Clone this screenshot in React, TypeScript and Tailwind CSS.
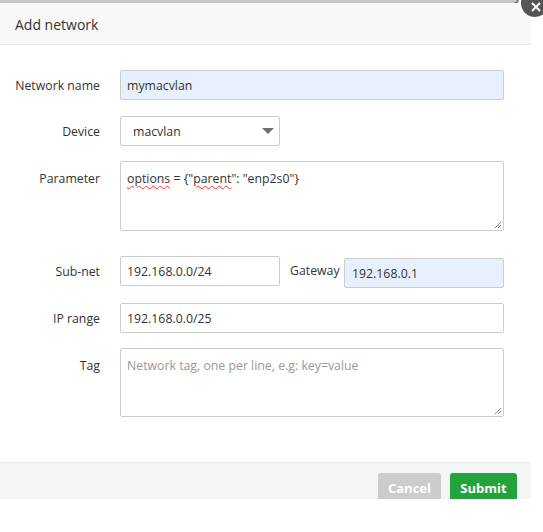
import React from 'react';

const font = { fontFamily: '"Open Sans", "Noto Sans", sans-serif' };

function ResizeGrip() {
  return (
    <svg className="absolute right-[1px] bottom-[1px]" width="9" height="9" viewBox="0 0 9 9">
      <path d="M8 2 L2 8 M8 5 L5 8" stroke="#888" strokeWidth="1" fill="none" />
    </svg>
  );
}

function Row({ label, top = false, children, className = '' }: { label: string; top?: boolean; children: React.ReactNode; className?: string }) {
  return (
    <div className={`flex items-start ${className}`}>
      <div className={`w-[100px] shrink-0 text-right text-[12.3px] text-[#333] ${top ? 'pt-[9px] leading-[18px]' : 'pt-[2px] leading-[28px]'}`}>{label}</div>
      <div className="ml-[20px] flex items-start">{children}</div>
    </div>
  );
}

export default function App() {
  return (
    <div className="relative w-[543px] h-[532px] bg-white overflow-hidden" style={font}>
      {/* page behind the overlay */}
      <div className="h-[3px] w-[531px] bg-[#c6c6c6] overflow-hidden">
        <div className="flex justify-between -mt-[12px] pl-[42px] pr-[10px] text-[13px] leading-[14px] text-[#555]">
          <span>Network number</span>
          <span>Gateway</span>
        </div>
      </div>

      {/* close button */}
      <div className="absolute left-[519px] -top-[13px] w-[32px] h-[32px] rounded-full bg-[#555] border-2 border-white flex items-center justify-center">
        <svg width="10" height="10" viewBox="0 0 10 10" className="mt-[8px] ml-[2px]">
          <path d="M1 1 L9 9 M9 1 L1 9" stroke="#fff" strokeWidth="2" />
        </svg>
      </div>

      <div className="w-[531px] bg-white">
        <div className="h-[42px] bg-[#f8f8f8] border-b border-[#eaeaea] flex items-center pl-[15px] pt-[1px] text-[14px] text-[#333]">
          Add network
        </div>

        <div className="pt-[25px] pb-[45px] text-[12.3px]">
          <Row label="Network name" className="mb-[16px]">
            <div className="w-[384px] h-[30px] border border-[#ccc] bg-[#e8f0fe] rounded-[2px] pl-[6px] pt-[2px] flex items-center text-[#333]">
              mymacvlan
            </div>
          </Row>

          <Row label="Device" className="mb-[15px]">
            <div className="w-[160px] h-[30px] border border-[#ccc] bg-white rounded-[2px] pl-[12px] pr-[5px] flex items-center justify-between text-[#333]">
              <span className="pt-[2px]">macvlan</span>
              <svg width="12" height="7" viewBox="0 0 12 7">
                <path d="M0 0 L12 0 L6 6 Z" fill="#707070" />
              </svg>
            </div>
          </Row>

          <Row label="Parameter" top className="mb-[25px]">
            <div className="relative w-[384px] h-[70px] border border-[#ccc] bg-white rounded-[2px] pl-[6px] pt-[8px] leading-[18px] text-[#333]">
              <span className="underline decoration-wavy decoration-red-500 decoration-1 underline-offset-2">options</span> = {'{'}"<span className="underline decoration-wavy decoration-red-500 decoration-1 underline-offset-2">parent</span>": "enp2s0"{'}'}
              <ResizeGrip />
            </div>
          </Row>

          <div className="flex items-start mb-[17px]">
            <div className="w-[100px] shrink-0 text-right text-[#333] pt-[2px] leading-[28px]">Sub-net</div>
            <div className="ml-[20px] w-[160px] h-[30px] border border-[#ccc] bg-white rounded-[2px] pl-[6px] pt-[2px] flex items-center text-[#333]">
              192.168.0.0/24
            </div>
            <div className="ml-[10px] w-[54px] text-[#333] pt-[1px] leading-[28px]">Gateway</div>
            <div className="mt-[2px] -mb-[2px] w-[160px] h-[30px] border border-[#ccc] bg-[#e8f0fe] rounded-[2px] pl-[7px] pt-[2px] flex items-center text-[#333]">
              192.168.0.1
            </div>
          </div>

          <Row label="IP range" className="mb-[15px]">
            <div className="w-[384px] h-[30px] border border-[#ccc] bg-white rounded-[2px] pl-[6px] pt-[2px] flex items-center text-[#333]">
              192.168.0.0/25
            </div>
          </Row>

          <Row label="Tag" top>
            <div className="relative w-[384px] h-[69px] border border-[#ccc] bg-white rounded-[2px] pl-[6px] pt-[8px] leading-[18px] text-[#999]">
              Network tag, one per line, e.g: key=value
              <ResizeGrip />
            </div>
          </Row>
        </div>

        <div className="h-[37px] bg-[#f4f6f6] border-t border-[#eaeaea] flex justify-end items-start pt-[10px] pr-[14px] gap-[9px] overflow-hidden">
          <div className="w-[63px] h-[32px] rounded-[3px] bg-[#cccccc] text-white font-bold text-[13px] flex items-start justify-center pt-[6px]">
            Cancel
          </div>
          <div className="w-[67px] h-[32px] rounded-[3px] bg-[#22a33c] text-white font-bold text-[13px] flex items-start justify-center pt-[6px]">
            Submit
          </div>
        </div>
      </div>
    </div>
  );
}
